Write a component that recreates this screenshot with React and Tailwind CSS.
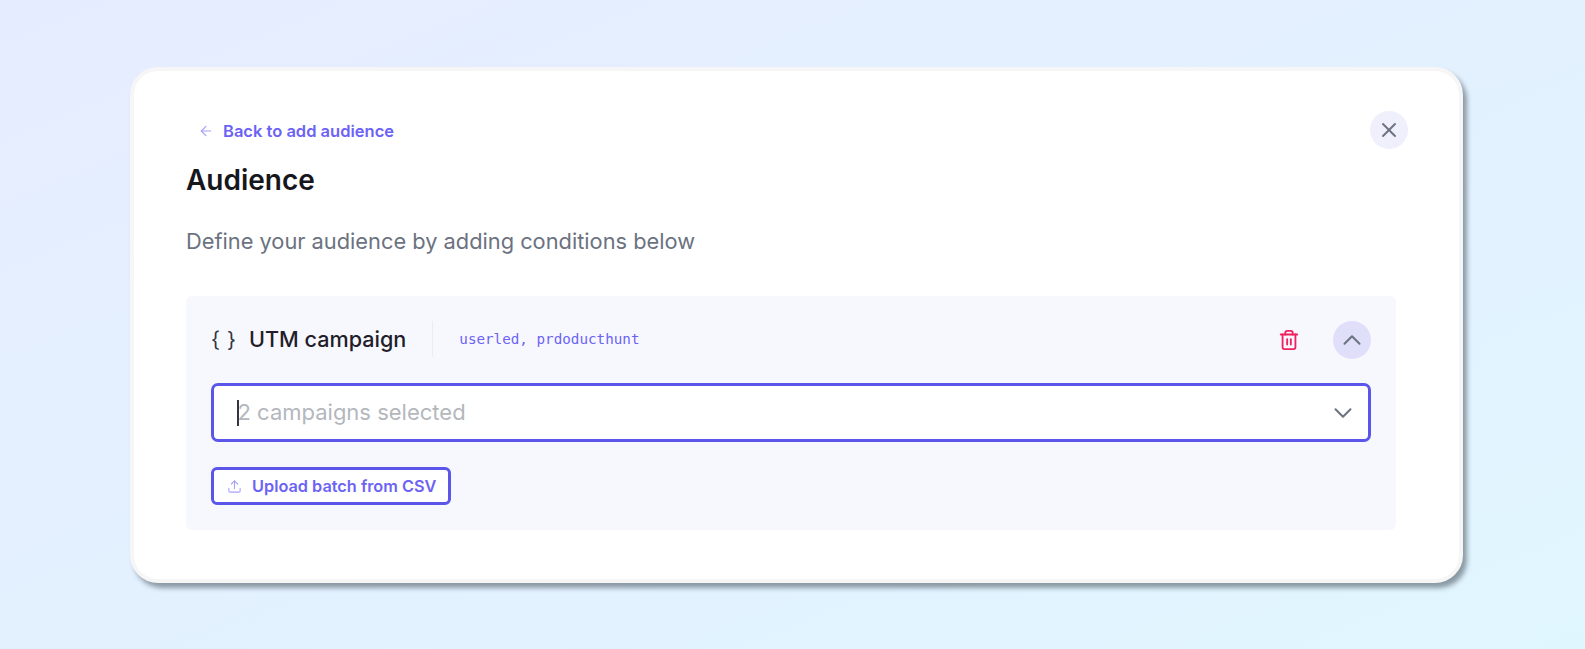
import React from 'react';
import { ArrowLeft, X, Trash2, ChevronUp, ChevronDown, Upload } from 'lucide-react';

const App = () => {
  return (
    <div
      className="w-[1585px] h-[649px] pt-[67px] pl-[130px] overflow-hidden bg-gradient-to-br from-[#e6ecff] to-[#e0f6ff] font-['Inter',sans-serif]"
    >
      <div className="relative w-[1333px] h-[516px] rounded-[28px] border-4 border-[#f6f6f7] bg-white shadow-[4px_5px_5px_rgba(90,105,115,0.65)] pl-[52px] pr-[63px] pt-[50px]">
        <button className="absolute top-[40px] right-[51px] w-[38px] h-[38px] rounded-full bg-[#f0effc] flex items-center justify-center text-[#6b7280]">
          <X size={24} strokeWidth={1.9} />
        </button>

        <a className="flex items-center gap-[9px] h-[20px] pl-[12px] text-[16.5px] font-semibold text-[#6c63f5]">
          <ArrowLeft size={16} strokeWidth={1.75} className="text-[#a8a2f8]" />
          Back to add audience
        </a>
        <h1 className="mt-[21px] text-[28px] leading-[36px] font-semibold text-[#16161d]">Audience</h1>
        <p className="mt-[29px] text-[21.8px] leading-[28px] text-[#6b7280]">Define your audience by adding conditions below</p>

        <div className="mt-[41px] w-[1210px] h-[234px] rounded-[6px] bg-[#f7f8fd] px-[25px] pt-[25px]">
          <div className="flex items-center h-[38px]">
            <span className="w-[25px] flex justify-between text-[21px] leading-none text-[#33363f] -mt-[2px]">
              <span>{'{'}</span>
              <span>{'}'}</span>
            </span>
            <span className="ml-[13px] -mt-[2px] text-[21.6px] font-medium text-[#1f2029]">UTM campaign</span>
            <div className="ml-[26px] -mt-[2px] w-px h-[36px] bg-[#eceafa]" />
            <span className="ml-[26px] text-[14.25px] text-[#6c63f5] font-['DejaVu_Sans_Mono',monospace]">userled, prdoducthunt</span>
            <Trash2 size={22} strokeWidth={2} className="ml-auto mr-[33px] text-[#f0215f]" />
            <button className="w-[38px] h-[38px] rounded-full bg-[#e0dffa] flex items-center justify-center text-[#6b7280]">
              <ChevronUp size={30} strokeWidth={1.6} />
            </button>
          </div>

          <div className="mt-[24px] h-[59px] rounded-[7px] border-[3px] border-[#5b55ea] bg-white flex items-center pl-[23px] pr-[10px]">
            <span className="w-[1.5px] h-[26px] bg-[#33363f]" />
            <span className="-ml-px text-[22px] text-[#b4b7bd]">2 campaigns selected</span>
            <ChevronDown size={30} strokeWidth={1.6} className="ml-auto text-[#6b7280]" />
          </div>

          <button className="mt-[25px] h-[38px] w-[240px] rounded-[6px] border-[3px] border-[#5b55ea] bg-white flex items-center pl-[13px] gap-[10px] text-[16.3px] font-semibold text-[#6c63f5]">
            <Upload size={15} strokeWidth={1.75} className="text-[#a8a2f8]" />
            Upload batch from CSV
          </button>
        </div>
      </div>
    </div>
  );
};

export default App;
